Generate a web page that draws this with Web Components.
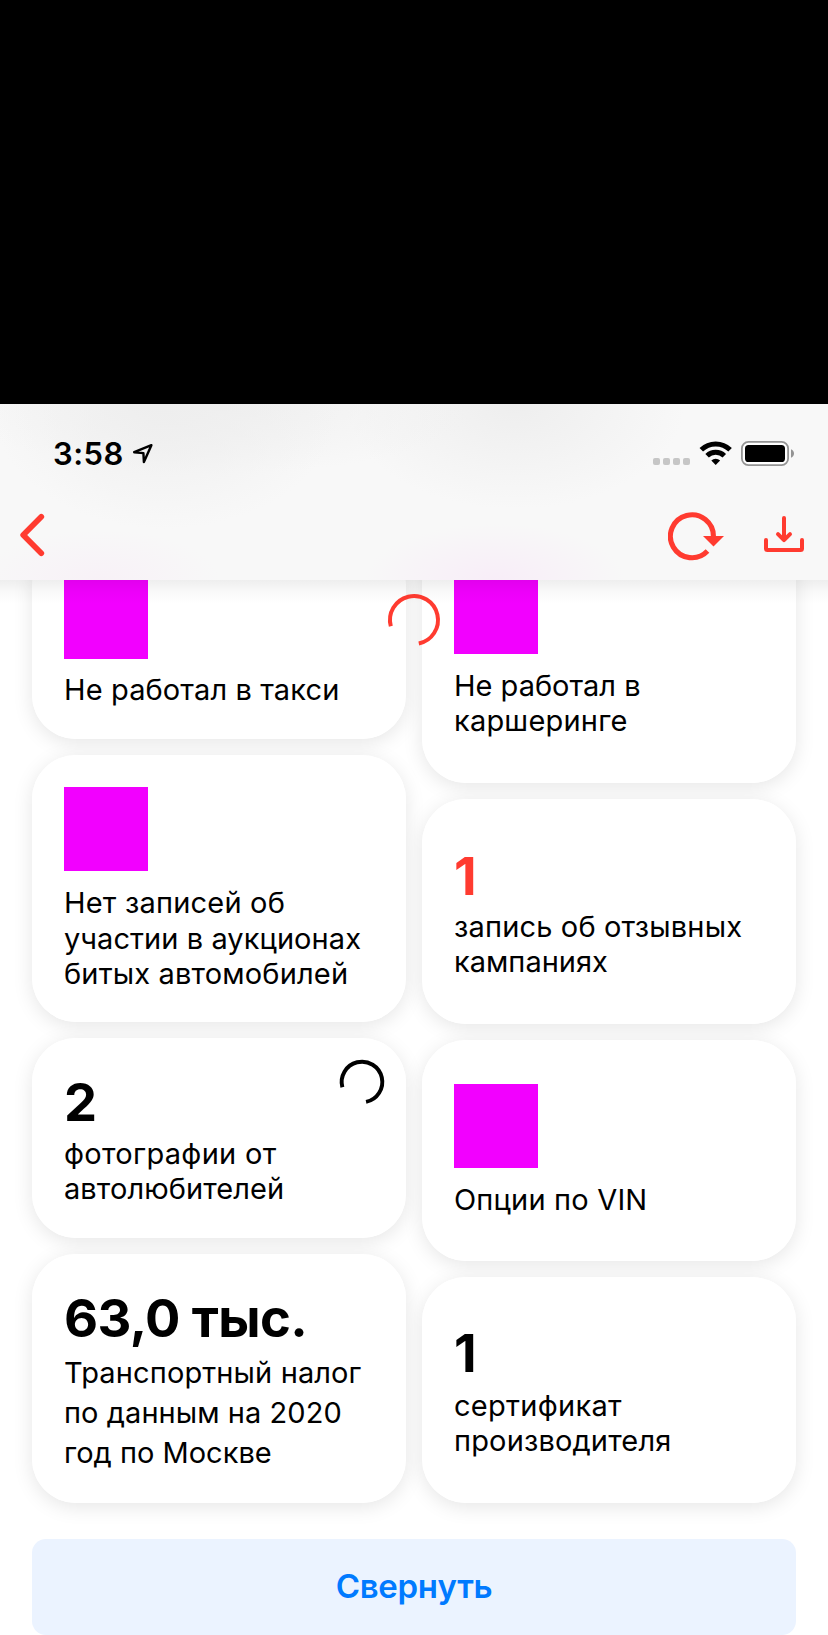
<!DOCTYPE html>
<html lang="ru">
<head>
<meta charset="utf-8">
<title>Отчёт</title>
<style>
html,body{margin:0;height:1635px;overflow:hidden;background:#fff}
body{font-family:Inter,"Noto Sans",sans-serif;color:#000}
</style>
</head>
<body>
<report-screen></report-screen>
<script>
const define=(name,html)=>{
  const t=document.createElement('template');t.innerHTML=html;
  customElements.define(name,class extends HTMLElement{
    constructor(){super();this.attachShadow({mode:'open'}).append(t.content.cloneNode(true));}
  });
};

define('status-bar',`<style>
:host{display:flex;align-items:center;height:98px;padding:2px 34px 0 53px;box-sizing:border-box}
.time{font-size:31px;font-weight:600;line-height:38px;width:79px;white-space:nowrap;letter-spacing:.5px}
svg{display:block;flex:none}
.sp{flex:1}
</style>
<span class="time">3:58</span>
<svg width="22" height="22" viewBox="0 0 22 22"><path d="M19.4 2.2 2.2 9.2l9.2.9.5 9z" fill="none" stroke="#000" stroke-width="2.4" stroke-linejoin="round"/></svg>
<span class="sp"></span>
<svg width="141" height="26" viewBox="653 441 141 26">
<g fill="#c6c6c6"><rect x="653" y="458" width="7" height="7" rx="2"/><rect x="663" y="458" width="7" height="7" rx="2"/><rect x="673" y="458" width="7" height="7" rx="2"/><rect x="683" y="458" width="7" height="7" rx="2"/></g>
<g fill="none" stroke="#000" stroke-width="5"><path d="M701.3 449.8a20.6 20.6 0 0 1 28.8 0"/><path d="M707.1 455.8a12.3 12.3 0 0 1 17.2 0"/></g>
<path d="M711.3 460.6a6.4 6.4 0 0 1 8.8 0L715.7 465z"/>
<rect x="741.9" y="441.9" width="46.2" height="23.2" rx="6.5" fill="#fff" stroke="#949494" stroke-width="1.8"/>
<rect x="745" y="445" width="40" height="17" rx="3.6"/>
<path d="M791 449.3c4 1.6 4 6.800 0 8.400z" fill="#949494"/>
</svg>`);

define('nav-bar',`<style>
:host{display:flex;align-items:center;justify-content:space-between;height:78px;padding:0 23px 0 19px;box-sizing:border-box}
svg{display:block;fill:none;stroke:#ff3b30}
</style>
<svg width="26" height="46" viewBox="19 512 26 46" style="margin-top:-12px"><path d="M41.300 516.700 23.200 535l18.100 18.200" stroke-width="5.700" stroke-linecap="round" stroke-linejoin="round"/></svg>
<svg width="137" height="50" viewBox="668 511 137 50" style="margin-top:-10px">
<path d="M713.400 537a21.500 21.500 0 1 0-5.900 14.100" stroke-width="5.100"/><path d="M703 536h21l-10.500 10.500z" fill="#ff3b30" stroke="none"/>
<g stroke-width="4" stroke-linecap="round" stroke-linejoin="round"><path d="M784 518v22M778 534.200l6 6 6-6"/><path d="M766 540v8.500q0 1.500 1.500 1.500h33q1.500 0 1.500-1.500V540"/></g>
</svg>`);

define('top-bar',`<style>
:host{display:block;position:relative;z-index:2;height:176px;
background:radial-gradient(ellipse 130px 56px at 495px 176px,#f8edf8 0,#f8edf800 100%),
radial-gradient(ellipse 120px 50px at 100px 176px,#f8f1f7 0,#f8f1f700 100%),
radial-gradient(ellipse 175px 125px at 165px 0,#eeeeee 0,#eeeeee00 100%),
radial-gradient(ellipse 260px 70px at 220px 0,#f0f0f0 0,#f0f0f000 100%),
radial-gradient(ellipse 170px 105px at 515px 0,#eeeeee 0,#eeeeee00 100%),#f8f8f8}
:host::after{content:"";position:absolute;left:0;right:0;top:100%;height:24px;background:linear-gradient(rgba(0,0,0,.065),rgba(0,0,0,.025) 50%,rgba(0,0,0,0))}
</style><status-bar></status-bar><nav-bar></nav-bar>`);

define('load-ring',`<style>:host{display:block}svg{display:block;width:100%;height:100%;overflow:visible;fill:none;stroke:currentColor}</style>
<svg viewBox="-26 -26 52 52"><path d="M-23.200 6.200A24 24 0 1 1 4.800 23.500" style="stroke-width:var(--w,4)"/></svg>`);

define('info-card',`<style>
:host{display:block;position:relative;box-sizing:border-box;height:var(--h);padding:var(--p,32px) 0 0 32px;border-radius:44px;background:#fff}
:host::before{content:"";position:absolute;inset:0;z-index:-1;border-radius:44px;box-shadow:0 4px 20px rgba(0,0,0,.1)}
.pic{display:none;width:84px;height:84px;background:#f200ff}
:host([pic]) .pic{display:block}
.text{margin-top:var(--g,14px)}
::slotted([slot=corner]){position:absolute;right:22px;top:22px;width:44px;height:44px}
</style><div class="pic"></div><slot name="num"></slot><div class="text"><slot></slot></div><slot name="corner"></slot>`);

define('big-num',`<style>:host{display:block;font-size:52.500px;font-weight:700;line-height:60px;white-space:nowrap;letter-spacing:var(--s,0)}</style><slot></slot>`);
define('text-line',`<style>:host{display:block;font-size:29px;line-height:var(--lh,35.400px);white-space:nowrap;letter-spacing:var(--s,0)}</style><slot></slot>`);
define('wide-button',`<style>:host{display:flex;align-items:center;justify-content:center;height:96px;margin:36px 32px 0;padding-bottom:2px;box-sizing:border-box;border-radius:14px;background:#ebf3ff;color:#007aff;font-size:33px;font-weight:600;letter-spacing:-.35px}</style><slot></slot>`);

define('report-screen',`<style>
:host{display:block;position:relative;height:1635px;overflow:hidden}
.bezel{height:404px;background:#000}
.cols{display:grid;grid-template-columns:374px 374px;gap:16px;padding:0 32px;margin-top:-54px;isolation:isolate}
.col{display:flex;flex-direction:column;gap:16px}
.left{padding-top:17px}
.busy{position:absolute;left:388px;top:594px;width:52px;height:52px;color:#ff3b30}
</style>
<div class="bezel"></div><top-bar></top-bar>
<div class="cols">
<div class="col left">
<info-card pic style="--h:196px;--g:13px"><text-line style="--s:.12px">Не работал в такси</text-line></info-card>
<info-card pic style="--h:267px;--lh:35.600px"><text-line style="--s:.2px">Нет записей об</text-line><text-line style="--s:.07px">участии в аукционах</text-line><text-line style="--s:.16px">битых автомобилей</text-line></info-card>
<info-card style="--h:200px;--p:34px;--g:4px"><big-num slot="num">2</big-num><text-line style="--s:.3px">фотографии от</text-line><text-line style="--s:.08px">автолюбителей</text-line><load-ring slot="corner" style="--w:4.700"></load-ring></info-card>
<info-card style="--h:249px;--p:34px;--g:5px;--lh:40px"><big-num slot="num" style="--s:-.6px">63,0 тыс.</big-num><text-line style="--s:.12px">Транспортный налог</text-line><text-line style="--s:.06px">по данным на 2020</text-line><text-line>год по Москве</text-line></info-card>
</div>
<div class="col">
<info-card pic style="--h:257px;--p:44px"><text-line>Не работал в</text-line><text-line style="--s:.2px">каршеринге</text-line></info-card>
<info-card style="--h:225px;--p:47px;--g:3px"><big-num slot="num" style="color:#ff3b30">1</big-num><text-line style="--s:.16px">запись об отзывных</text-line><text-line>кампаниях</text-line></info-card>
<info-card pic style="--h:221px;--p:44px"><text-line style="--s:.18px">Опции по VIN</text-line></info-card>
<info-card style="--h:226px;--p:46px;--g:5px"><big-num slot="num">1</big-num><text-line style="--s:.28px">сертификат</text-line><text-line style="--s:.15px">производителя</text-line></info-card>
</div>
</div>
<wide-button>Свернуть</wide-button>
<load-ring class="busy"></load-ring>`);
</script>
</body>
</html>
